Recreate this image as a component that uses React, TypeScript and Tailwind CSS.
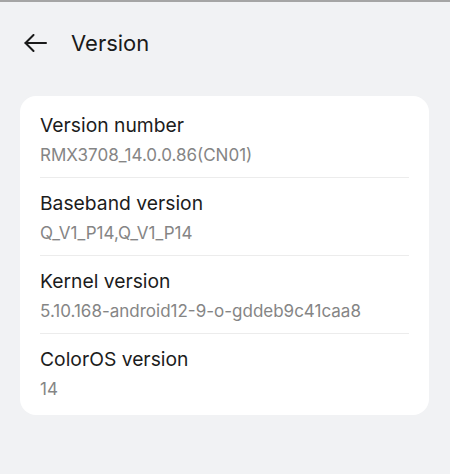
import React from "react";

const items = [
  { title: "Version number", value: "RMX3708_14.0.0.86(CN01)" },
  { title: "Baseband version", value: "Q_V1_P14,Q_V1_P14" },
  { title: "Kernel version", value: "5.10.168-android12-9-o-gddeb9c41caa8" },
  { title: "ColorOS version", value: "14" },
];

export default function App() {
  return (
    <div
      className="w-[450px] h-[474px] bg-[#f1f2f4] border-t-2 border-[#a5a5a5] overflow-hidden"
      style={{ fontFamily: "Inter, 'Noto Sans', sans-serif" }}
    >
      <div className="h-[82px] flex items-center pl-[24px] pb-[1px]">
        <svg width="23" height="18" viewBox="0 0 23 18" fill="none" stroke="#1a1a1a" strokeWidth="2" strokeLinecap="round" strokeLinejoin="round">
          <path d="M22 9H1.5" />
          <path d="M9.5 1L1.5 9L9.5 17" />
        </svg>
        <span className="ml-[24px] text-[22px] text-[#1a1a1a] leading-none">Version</span>
      </div>
      <div className="mx-5 mt-[12px] w-[409px] bg-white rounded-2xl py-1 px-5">
        {items.map((it, i) => (
          <div
            key={it.title}
            className={`pt-[13px] pb-[11px] flex flex-col gap-[7px] ${i < items.length - 1 ? "border-b border-[#ececec]" : ""}`}
          >
            <div className="text-[19.3px] leading-[24px] text-[#1c1c1c]">{it.title}</div>
            <div className="text-[17px] leading-[22px] text-[#858585]">{it.value}</div>
          </div>
        ))}
      </div>
    </div>
  );
}
